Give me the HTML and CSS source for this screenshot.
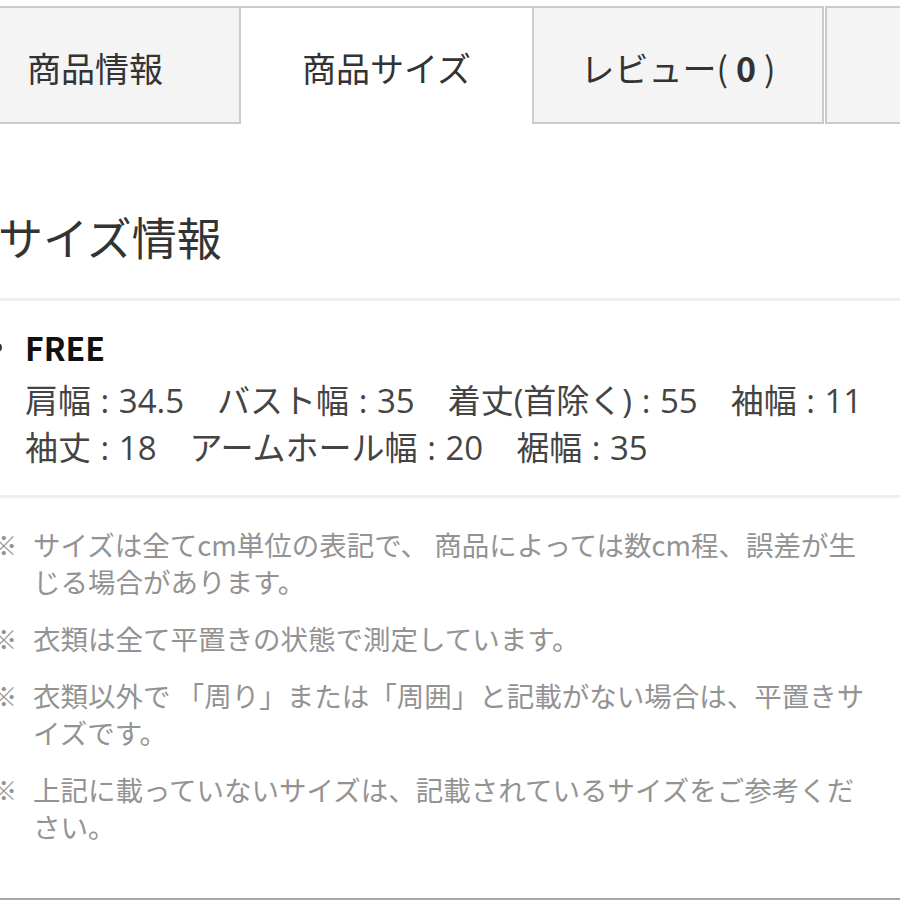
FILE: index.html
```html
<!DOCTYPE html>
<html lang="ja">
<head>
    <meta charset="UTF-8">
    <meta name="viewport" content="width=device-width, initial-scale=1.0">
    <title>商品サイズ</title>
    <link rel="stylesheet" href="styles.css">
</head>
<body>
    <div class="page">
        <!-- Tabs -->
        <ul class="tabs">
            <li class="tab">商品情報</li>
            <li class="tab tab-active">商品サイズ</li>
            <li class="tab">レビュー(<b class="tab-count">0</b>)</li>
            <li class="tab tab-last">お問合せ</li>
        </ul>

        <!-- Size info -->
        <section class="size-info">
            <h2 class="size-title">サイズ情報</h2>

            <div class="size-list">
                <div class="size-name">FREE</div>
                <p class="size-values">肩幅 : 34.5　バスト幅 : 35　着丈(首除く) : 55　袖幅 : 11<br>袖丈 : 18　アームホール幅 : 20　裾幅 : 35</p>
            </div>

            <ul class="notes">
                <li class="note"><span class="mark">※</span><span class="note-text">サイズは全てcm単位の表記で、 商品によっては数cm程、誤差が生<br>じる場合があります。</span></li>
                <li class="note"><span class="mark">※</span><span class="note-text">衣類は全て平置きの状態で測定しています。</span></li>
                <li class="note"><span class="mark">※</span><span class="note-text">衣類以外で 「周り」または「周囲」と記載がない場合は、平置きサ<br>イズです。</span></li>
                <li class="note"><span class="mark">※</span><span class="note-text">上記に載っていないサイズは、記載されているサイズをご参考くだ<br>さい。</span></li>
            </ul>
        </section>
    </div>
</body>
</html>
```

FILE: styles.css
```css
body {
    margin: 0;
    padding: 0;
    background-color: #fff;
    color: #333;
    font-family: "Noto Sans CJK JP", "Noto Sans", sans-serif;
    overflow: hidden;
}

.page {
    width: 1200px;
    margin-left: -51px;
    padding-top: 6px;
}

/* Tabs */
.tabs {
    display: flex;
    list-style: none;
    margin: 0;
    padding: 0;
}

.tab {
    width: 292px;
    height: 118px;
    box-sizing: border-box;
    display: flex;
    align-items: center;
    justify-content: center;
    padding-top: 4px;
    background-color: #f4f4f4;
    border: 2px solid #cbcbcb;
    font-size: 34px;
    color: #333;
    white-space: nowrap;
}

.tab-active {
    width: 291px;
    background-color: #fff;
    border-left: none;
    border-right: none;
    border-bottom-color: #fff;
}

.tab-last {
    margin-left: 1px;
}

.tab-count {
    font-weight: 700;
    margin: 0 8px;
}

/* Size info */
.size-title {
    margin: 86px 0 0;
    padding: 0 0 35px 49px;
    font-size: 45px;
    line-height: 53px;
    font-weight: 400;
    color: #333;
    border-bottom: 3px solid #efefef;
}

.size-list {
    padding: 26px 0 24px 44px;
    border-bottom: 3px solid #efefef;
}

.size-name {
    display: flex;
    align-items: center;
    font-size: 32px;
    line-height: 40px;
    font-weight: 700;
    color: #111;
}

.size-name::before {
    content: "";
    width: 9px;
    height: 9px;
    border-radius: 50%;
    background-color: #333;
    margin-right: 23px;
}

.size-values {
    margin: 10px 0 0 32px;
    font-family: "Open Sans", "Noto Sans CJK JP", sans-serif;
    font-size: 33px;
    line-height: 47px;
    word-spacing: 1px;
    color: #444;
    white-space: nowrap;
}

/* Notes */
.notes {
    list-style: none;
    margin: 0;
    padding: 28px 0 53px 41px;
    border-bottom: 3px solid #a8a8a8;
}

.note {
    display: flex;
    font-size: 27.5px;
    line-height: 37px;
    color: #939393;
    margin-bottom: 20px;
    white-space: nowrap;
}

.note:last-child {
    margin-bottom: 0;
}

.mark {
    flex: 0 0 43px;
}
```
